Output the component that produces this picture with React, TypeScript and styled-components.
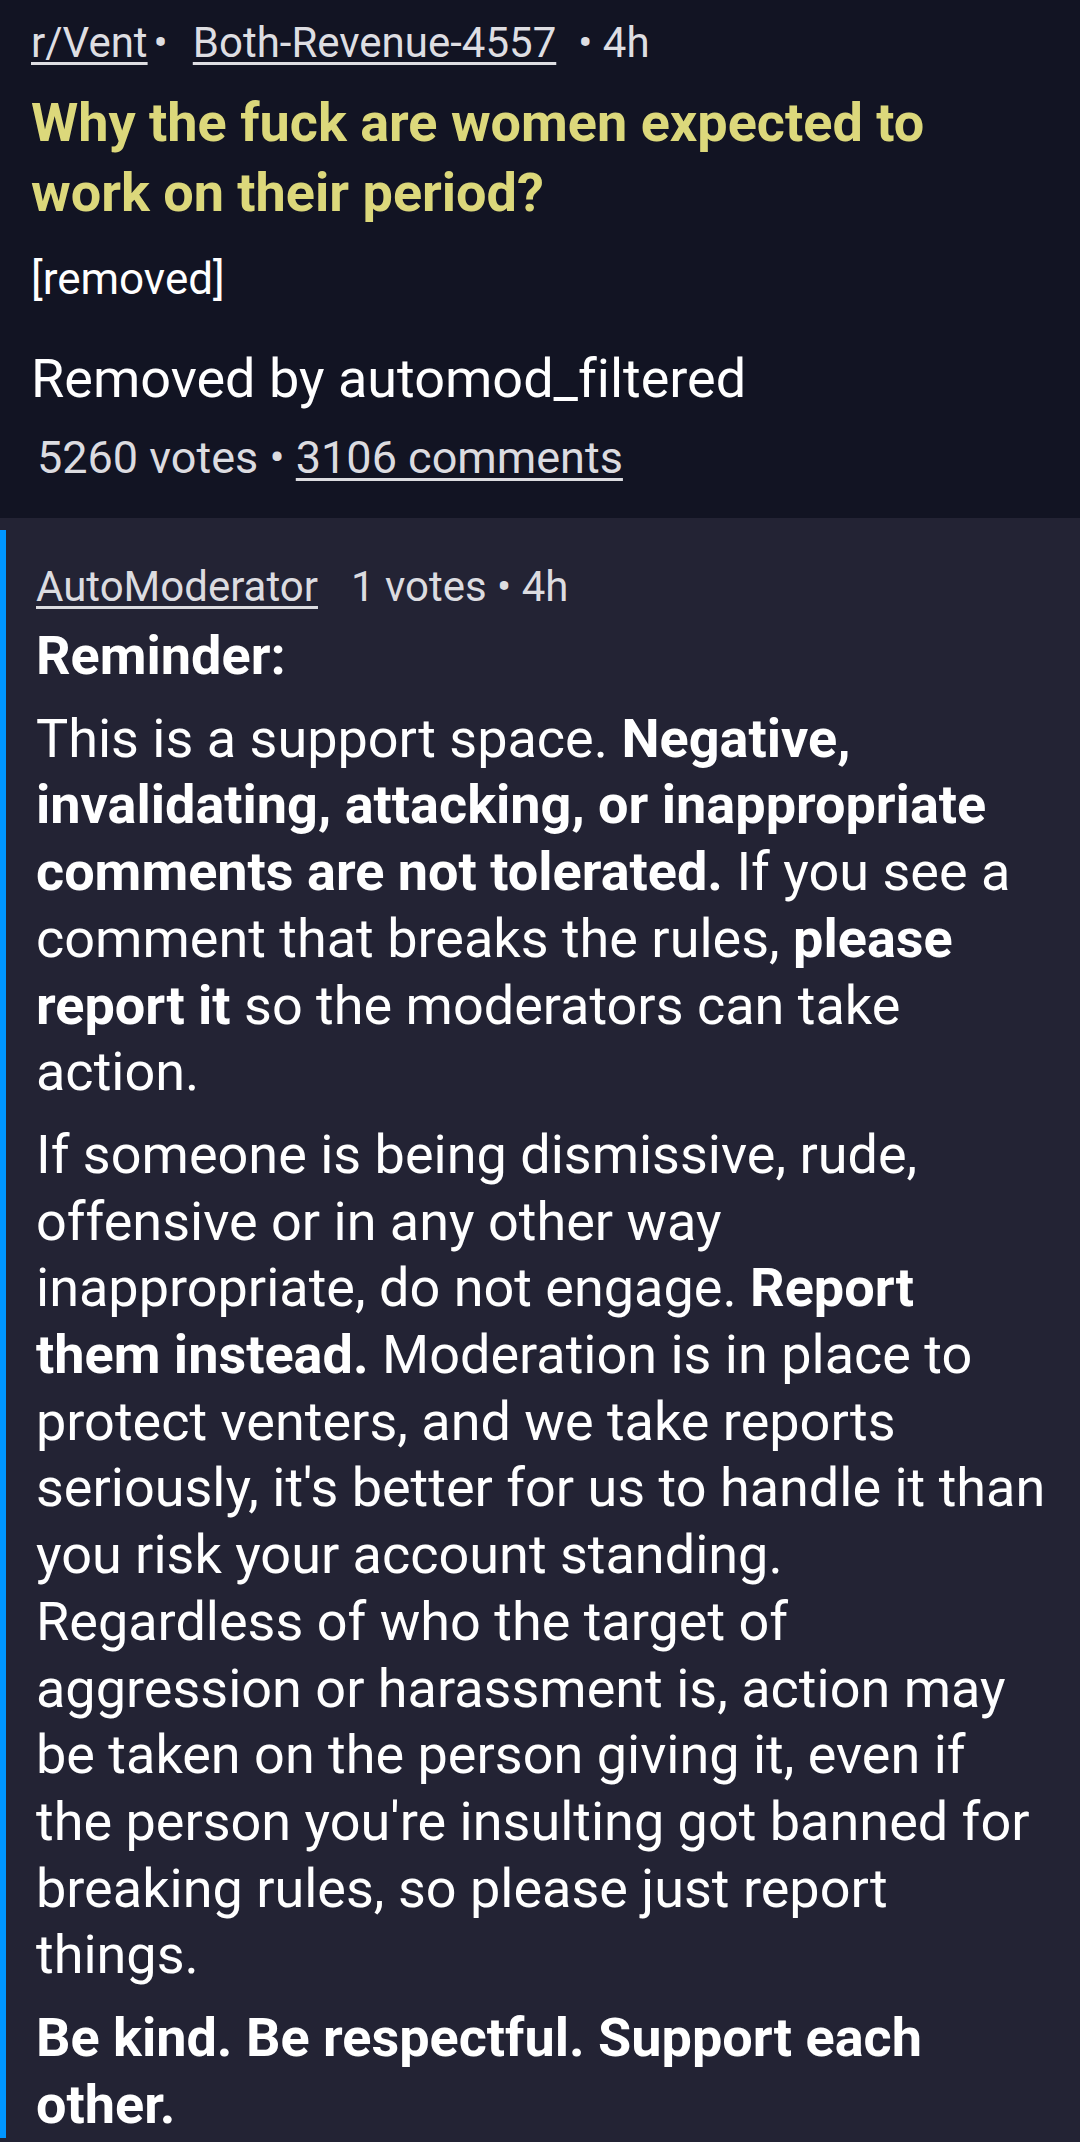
import React from "react";
import styled, { createGlobalStyle } from "styled-components";

const Global = createGlobalStyle`
  html, body { margin: 0; padding: 0; background: #232334; }
  body {
    font-family: Roboto, "Noto Sans", "Liberation Sans", sans-serif;
    font-variant-ligatures: no-common-ligatures;
  }
  * { box-sizing: border-box; }
`;

const Page = styled.div`
  width: 1080px;
  min-height: 2142px;
  background: #232334;
  overflow: hidden;
`;

const Header = styled.header`
  background: #121423;
  padding: 18px 30px 34px 31px;
  display: flex;
  flex-direction: column;
`;

const MetaRow = styled.div`
  font-size: 42px;
  line-height: 50px;
  color: #dedee2;
  display: flex;
  align-items: baseline;
  white-space: pre;
`;

const Link = styled.a<{ $gapLeft?: number }>`
  color: inherit;
  text-decoration: underline;
  text-decoration-thickness: 3px;
  text-underline-offset: 5px;
  margin-left: ${(p) => p.$gapLeft ?? 0}px;
`;

const Sep = styled.span<{ $l?: number }>`
  margin-left: ${(p) => p.$l ?? 0}px;
`;

const Title = styled.h1`
  margin: 20px 0 0;
  font-size: 54px;
  line-height: 70px;
  font-weight: 700;
  color: #dcd87b;
`;

const Removed = styled.div`
  margin-top: 26px;
  font-size: 44px;
  line-height: 50px;
  color: #ffffff;
`;

const RemovedBy = styled.div`
  margin-top: 42px;
  font-size: 54px;
  line-height: 66px;
  color: #ffffff;
`;

const Stats = styled.div`
  margin-top: 20px;
  padding-left: 6px;
  font-size: 45px;
  line-height: 52px;
  color: #dcdce0;
  white-space: pre;
`;

const CommentWrap = styled.section`
  padding-top: 12px;
`;

const Comment = styled.article`
  border-left: 6px solid #0096ff;
  padding: 31px 32px 0 30px;
`;

const CommentMeta = styled.div`
  font-size: 42px;
  line-height: 52px;
  color: #dcdce0;
  white-space: pre;
`;

const Body = styled.div`
  margin-top: 10px;
  color: #ffffff;
  font-size: 54px;
  line-height: 66.7px;
`;

const Para = styled.p<{ $bold?: boolean }>`
  margin: 0 0 16px;
  font-weight: ${(p) => (p.$bold ? 700 : 400)};
`;

export default function App() {
  return (
    <Page>
      <Global />
      <Header>
        <MetaRow>
          <Link>r/Vent</Link>
          <Sep $l={6}>•</Sep>
          <Link $gapLeft={25}>Both-Revenue-4557</Link>
          <Sep $l={22}>• 4h</Sep>
        </MetaRow>
        <Title>
          Why the fuck are women expected to work on their period?
        </Title>
        <Removed>[removed]</Removed>
        <RemovedBy>Removed by automod_filtered</RemovedBy>
        <Stats>
          5260 votes • <Link>3106 comments</Link>
        </Stats>
      </Header>
      <CommentWrap>
        <Comment>
          <CommentMeta>
            <Link>AutoModerator</Link>
            <Sep $l={33}>1 votes • 4h</Sep>
          </CommentMeta>
          <Body>
            <Para $bold>Reminder:</Para>
            <Para>
              This is a support space.{" "}
              <b>
                Negative, invalidating, attacking, or inappropriate comments
                are not tolerated.
              </b>{" "}
              If you see a comment that breaks the rules,{" "}
              <b>please report it</b> so the moderators can take action.
            </Para>
            <Para>
              If someone is being dismissive, rude, offensive or in any other
              way inappropriate, do not engage. <b>Report them instead.</b>{" "}
              Moderation is in place to protect venters, and we take reports
              seriously, it's better for us to handle it than you risk your
              account standing. Regardless of who the target of aggression or
              harassment is, action may be taken on the person giving it, even
              if the person you're insulting got banned for breaking rules, so
              please just report things.
            </Para>
            <Para $bold>Be kind. Be respectful. Support each other.</Para>
          </Body>
        </Comment>
      </CommentWrap>
    </Page>
  );
}
